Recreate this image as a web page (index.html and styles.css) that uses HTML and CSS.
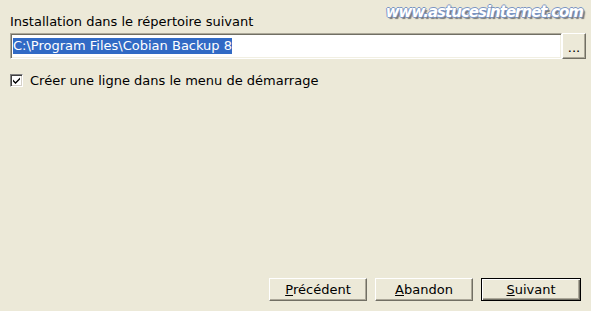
FILE: index.html
```html
<!DOCTYPE html>
<html>
<head>
<meta charset="utf-8">
<link rel="stylesheet" href="styles.css">
</head>
<body>
<div class="page">
  <div class="watermark">www.astucesinternet.com</div>
  <div class="label">Installation dans le répertoire suivant</div>
  <div class="pathrow">
    <div class="field"><span class="sel">C:\Program Files\Cobian Backup 8</span></div>
    <div class="browse">...</div>
  </div>
  <div class="check">
    <span class="box"><svg width="9" height="9" viewBox="0 0 9 9"><path d="M1 3.5 L3.5 6 L8 1.5 L8 3.5 L3.5 8 L1 5.5 Z" fill="#000"/></svg></span>
    <span>Créer une ligne dans le menu de démarrage</span>
  </div>
  <div class="spacer"></div>
  <div class="buttons">
    <div class="btn"><u>P</u>récédent</div>
    <div class="btn"><u>A</u>bandon</div>
    <div class="btn def"><u>S</u>uivant</div>
  </div>
</div>
</body>
</html>
```
FILE: styles.css
```css
html, body { margin: 0; padding: 0; }
body { background: #ECE9D8; font-family: "DejaVu Sans", Verdana, sans-serif; font-size: 13px; color: #000; }
.page { position: relative; height: 311px; box-sizing: border-box; padding: 14px 5px 10px 10px; display: flex; flex-direction: column; }
.watermark { position: absolute; right: 8px; top: 3px; font-family: "DejaVu Sans", sans-serif; font-weight: bold; font-style: italic; font-size: 15px; color: #fff; letter-spacing: -1px;
  text-shadow: -1px 0 #7b95c2, 1px 0 #7b95c2, 0 -1px #7b95c2, 0 1px #7b95c2, 2px 2px 1px #777; }
.label { height: 19px; line-height: 15px; }
.pathrow { display: flex; height: 26px; }
.field { flex: 1; background: #fff; border-top: 1px solid #ACA899; border-left: 1px solid #ACA899; border-bottom: 1px solid #fff; border-right: 1px solid #fff; box-shadow: inset 1px 1px 0 #716F64, inset -1px -1px 0 #F1EFE2; padding: 4px 2px; display: flex; align-items: center; }
.sel { background: #316AC5; color: #fff; line-height: 16px; }
.browse { width: 24px; box-sizing: border-box; border-top: 1px solid #fff; border-left: 1px solid #fff; border-right: 1px solid #716F64; border-bottom: 1px solid #716F64; box-shadow: inset -1px -1px 0 #ACA899; display: flex; align-items: center; justify-content: center; padding-top: 2px; }
.check { display: flex; align-items: center; gap: 7px; margin-top: 14px; }
.box { width: 13px; height: 13px; box-sizing: border-box; background: #fff; border-top: 1px solid #808080; border-left: 1px solid #808080; border-right: 1px solid #fff; border-bottom: 1px solid #fff; box-shadow: inset 1px 1px 0 #404040, inset -1px -1px 0 #D4D0C8; display: flex; align-items: center; justify-content: center; }
.spacer { flex: 1; }
.buttons { display: flex; justify-content: flex-end; gap: 8px; padding-right: 5px; }
.btn { width: 98px; height: 23px; box-sizing: border-box; border-top: 1px solid #fff; border-left: 1px solid #fff; border-right: 1px solid #716F64; border-bottom: 1px solid #716F64; box-shadow: inset -1px -1px 0 #ACA899; display: flex; align-items: center; justify-content: center; }
.btn.def { width: 100px; border: 1px solid #000; box-shadow: inset 1px 1px 0 #fff, inset -1px -1px 0 #716F64, inset -2px -2px 0 #ACA899; }
```
